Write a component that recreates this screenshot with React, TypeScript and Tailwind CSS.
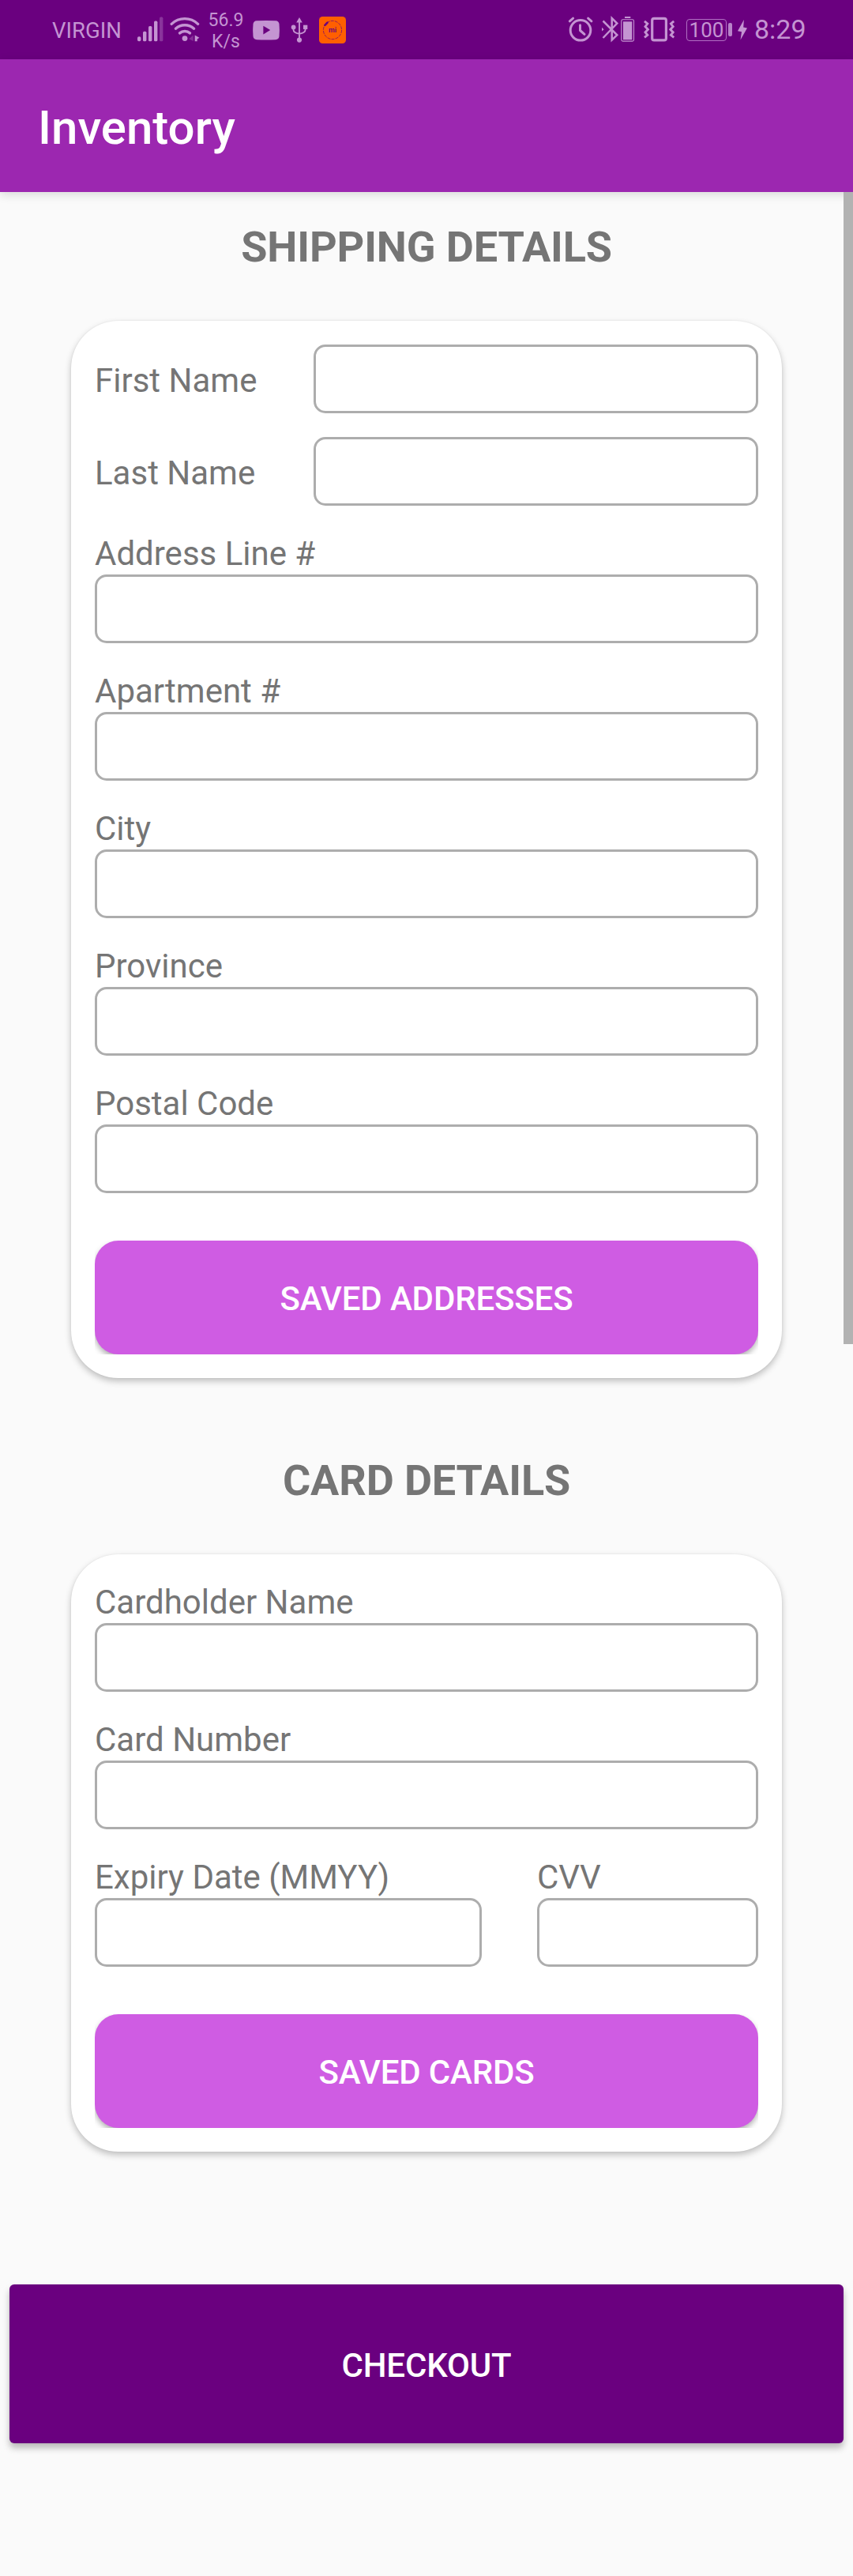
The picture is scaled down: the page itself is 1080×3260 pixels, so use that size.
import type { ReactNode } from "react";

const INK = "#c494d2";
const BAR = "#6a007f";

function SignalIcon() {
  return (
    <svg className="ml-[24px] h-[75px] w-[34px] shrink-0" viewBox="173 0 34 75" fill={INK}>
      <rect x="174" y="46.3" width="4.4" height="6" rx="1.8" />
      <rect x="181" y="39.7" width="4.4" height="12.6" rx="1.6" />
      <rect x="188" y="33" width="4.4" height="19.3" rx="1.6" />
      <rect x="195" y="26.6" width="4.4" height="25.7" rx="1.6" />
      <rect x="202" y="21.6" width="4.4" height="30.7" rx="1.6" opacity="0.35" />
    </svg>
  );
}

function WifiIcon() {
  return (
    <svg className="ml-[8px] h-[75px] w-[39px] shrink-0" viewBox="215 0 39 75" fill="none" stroke={INK} strokeWidth="3.4" strokeLinecap="round">
      <path d="M217.2 30.4C226.5 21.4 241.3 21.4 250.6 30.4" />
      <path d="M222.4 36.2C229 30.3 239 30.3 245.6 36.2" />
      <path d="M227.5 41.9C231.3 38.6 236.7 38.6 240.5 41.9" />
      <circle cx="234" cy="48.6" r="3.4" fill={INK} stroke="none" />
      <path d="M244.7 44.5V52L239.3 49.3Z" fill={INK} stroke="none" opacity="0.3" />
      <path d="M246.7 44.5L252.4 47.7L249.7 49.5V52.3H246.7Z" fill={INK} stroke="none" />
    </svg>
  );
}

function VideoIcon() {
  return (
    <svg className="ml-[11px] h-[75px] w-[36px] shrink-0" viewBox="319 0 36 75">
      <path d="M325 26.3Q337 25.7 349 26.3Q353 26.5 353.5 30.5Q354.3 38.3 353.5 46Q353 50 349 50.2Q337 50.8 325 50.2Q321 50 320.5 46Q319.7 38.3 320.5 30.5Q321 26.5 325 26.3Z" fill={INK} />
      <path d="M333.4 32.7V43.4L342.2 38Z" fill={BAR} />
    </svg>
  );
}

function UsbIcon() {
  return (
    <svg className="ml-[12px] h-[75px] w-[24px] shrink-0" viewBox="367 0 24 75" fill={INK}>
      <path d="M379 22L382.8 28.5H375.2Z" />
      <path d="M379 27V50M371.5 35V37.5Q371.5 41.5 379 42.8Q386.6 41.5 386.6 37.5V35" fill="none" stroke={INK} strokeWidth="1.9" />
      <circle cx="379" cy="50.6" r="3.1" />
      <circle cx="371.6" cy="34.4" r="2.9" />
      <rect x="384" y="31.7" width="5.3" height="5.3" />
    </svg>
  );
}

function MiIcon() {
  return (
    <svg className="ml-[12px] h-[75px] w-[36px] shrink-0" viewBox="403 0 36 75">
      <rect x="404" y="21" width="34" height="34" rx="4.5" fill="#ff5f00" />
      <circle cx="421" cy="38" r="11.6" fill="none" stroke={BAR} strokeWidth="0.7" strokeDasharray="4 1.2" />
      <path d="M411.2 32L415 28.2" stroke="#ff5f00" strokeWidth="5" />
      <path d="M411.4 31.8L414.5 28.7" stroke={BAR} strokeWidth="2.6" strokeLinecap="round" />
      <text x="421" y="41" textAnchor="middle" textLength="10" lengthAdjust="spacingAndGlyphs" fontSize="9" fontWeight="600" fill={BAR}>mi</text>
    </svg>
  );
}

function AlarmIcon() {
  return (
    <svg className="h-[75px] w-[34px] shrink-0" viewBox="718 0 34 75" fill="none" stroke={INK} strokeWidth="3" strokeLinecap="round" strokeLinejoin="round">
      <circle cx="735" cy="38.3" r="12.8" />
      <path d="M734.5 31.7V38.5L740 43.3M721.3 26.8L725.6 23.2M744.6 23.2L748.9 26.8" />
    </svg>
  );
}

function BluetoothIcon() {
  return (
    <svg className="ml-[8px] h-[75px] w-[46px] shrink-0" viewBox="760 0 46 75" fill="none" stroke={INK} strokeWidth="2.5">
      <path d="M763.5 26.5L781.3 44.3L774.7 50.5V23L781.3 29.6L763.5 48" strokeLinejoin="miter" />
      <path d="M762 34.8L764.6 37.2L762 39.6Z" fill={INK} stroke="none" />
      <rect x="786.8" y="24.8" width="15.7" height="27.3" rx="1.8" strokeWidth="1.1" />
      <rect x="789" y="27.3" width="11.3" height="23" fill={INK} stroke="none" />
      <rect x="791" y="21" width="7.3" height="2" fill={INK} stroke="none" />
    </svg>
  );
}

function VibrateIcon() {
  return (
    <svg className="ml-[8px] h-[75px] w-[42px] shrink-0" viewBox="814 0 42 75" fill="none" stroke={INK}>
      <rect x="825.7" y="23.4" width="17.7" height="27.5" rx="2.5" strokeWidth="3.2" />
      <path d="M816 26.8L819.8 30L817 33.7L820.4 37.3L817 40.9L819.8 44.3L816 47.4" strokeWidth="2.9" />
      <path d="M853.2 26.8L849.4 30L852.2 33.7L848.8 37.3L852.2 40.9L849.4 44.3L853.2 47.4" strokeWidth="2.9" />
    </svg>
  );
}

function BoltIcon() {
  return (
    <svg className="ml-[6px] h-[75px] w-[14px] shrink-0" viewBox="933 0 14 75" fill={INK}>
      <path d="M941.9 25L934 39.2L939 40.2L937.5 50.5L946 35.5L941.2 34.5Z" />
    </svg>
  );
}

function StatusBar() {
  return (
    <div className="flex h-[75px] items-center justify-between bg-[#6a007f] pr-[61px] pl-[66px] text-[#c494d2]">
      <div className="flex items-center">
        <span className="w-[83px] pt-px text-[27.5px] leading-[75px] whitespace-nowrap">VIRGIN</span>
        <SignalIcon />
        <WifiIcon />
        <div className="ml-[10px] flex w-[44px] flex-col items-center pt-[3px] text-[23px] leading-[27px]">
          <span>56.9</span>
          <span>K/s</span>
        </div>
        <VideoIcon />
        <UsbIcon />
        <MiIcon />
      </div>
      <div className="flex items-center">
        <AlarmIcon />
        <BluetoothIcon />
        <VibrateIcon />
        <div className="ml-[13px] flex h-[28px] w-[51px] items-center justify-center rounded-[4px] border border-[#b070c2] text-[26px] leading-[26px]">100</div>
        <div className="ml-[2px] h-[17px] w-[5px] rounded-[2px] bg-[#b883c9]" />
        <BoltIcon />
        <span className="ml-[8px] w-[64px] text-[34px] leading-[75px]">8:29</span>
      </div>
    </div>
  );
}

function TextBox({ label }: { label: string }) {
  return (
    <input
      aria-label={label}
      className="block h-[87px] w-full min-w-0 rounded-[15px] border-[3px] border-[#adadad] bg-white px-5 text-[42px] outline-none"
    />
  );
}

function InlineField({ label }: { label: string }) {
  return (
    <div className="mb-[30px] flex h-[87px]">
      <span className="w-[277px] shrink-0 leading-[91px]">{label}</span>
      <TextBox label={label} />
    </div>
  );
}

function Field({ label, className = "" }: { label: string; className?: string }) {
  return (
    <div className={className}>
      <div className="h-[57px] leading-[61px] whitespace-nowrap">{label}</div>
      <TextBox label={label} />
    </div>
  );
}

function SavedButton({ children }: { children: ReactNode }) {
  return (
    <div className="mt-[60px] h-[144px] overflow-hidden">
      <button className="block h-[144px] w-full rounded-[30px] bg-[#cf5ce3] text-center leading-[147px] font-medium tracking-[-0.15px] text-white shadow-[0_4px_7px_rgba(0,0,0,0.3)]">
        {children}
      </button>
    </div>
  );
}

function Section({ title, className, children }: { title: string; className: string; children: ReactNode }) {
  return (
    <section className={className}>
      <h2 className="text-center text-[54px] leading-[72px] font-bold tracking-[-0.15px]">{title}</h2>
      <div className="mx-[90px] mt-[57px] rounded-[60px] bg-white p-[30px] shadow-[0_4px_8px_rgba(0,0,0,0.24),0_0_2px_rgba(0,0,0,0.08)]">
        {children}
      </div>
    </section>
  );
}

export default function App() {
  return (
    <div className="relative h-[3260px] w-[1080px] overflow-hidden bg-[#fafafa] font-['Roboto',sans-serif] text-[42px] text-[#757575]">
      <StatusBar />
      <header className="h-[168px] bg-[#9c27b0] pl-[48px] text-[60px] leading-[173px] font-medium text-white shadow-[0_3px_12px_rgba(0,0,0,0.14)]">
        Inventory
      </header>
      <main>
        <Section title="SHIPPING DETAILS" className="pt-[34px]">
          <InlineField label="First Name" />
          <InlineField label="Last Name" />
          <div className="flex flex-col gap-[30px]">
            <Field label="Address Line #" />
            <Field label="Apartment #" />
            <Field label="City" />
            <Field label="Province" />
            <Field label="Postal Code" />
          </div>
          <SavedButton>SAVED ADDRESSES</SavedButton>
        </Section>
        <Section title="CARD DETAILS" className="pt-[94px]">
          <div className="flex flex-col gap-[30px]">
            <Field label="Cardholder Name" />
            <Field label="Card Number" />
            <div className="flex justify-between">
              <Field label="Expiry Date (MMYY)" className="w-[490px]" />
              <Field label="CVV" className="w-[280px]" />
            </div>
          </div>
          <SavedButton>SAVED CARDS</SavedButton>
        </Section>
        <div className="px-[12px] pt-[168px]">
          <button className="block h-[201px] w-full rounded-[6px] bg-[#6a007f] text-center leading-[205px] font-medium tracking-[-0.15px] text-white shadow-[0_6px_9px_rgba(0,0,0,0.26),0_0_2px_rgba(0,0,0,0.08)]">
            CHECKOUT
          </button>
        </div>
      </main>
      <div className="absolute top-[243px] right-0 h-[1458px] w-[12px] bg-[#b2b2b2]" />
    </div>
  );
}
